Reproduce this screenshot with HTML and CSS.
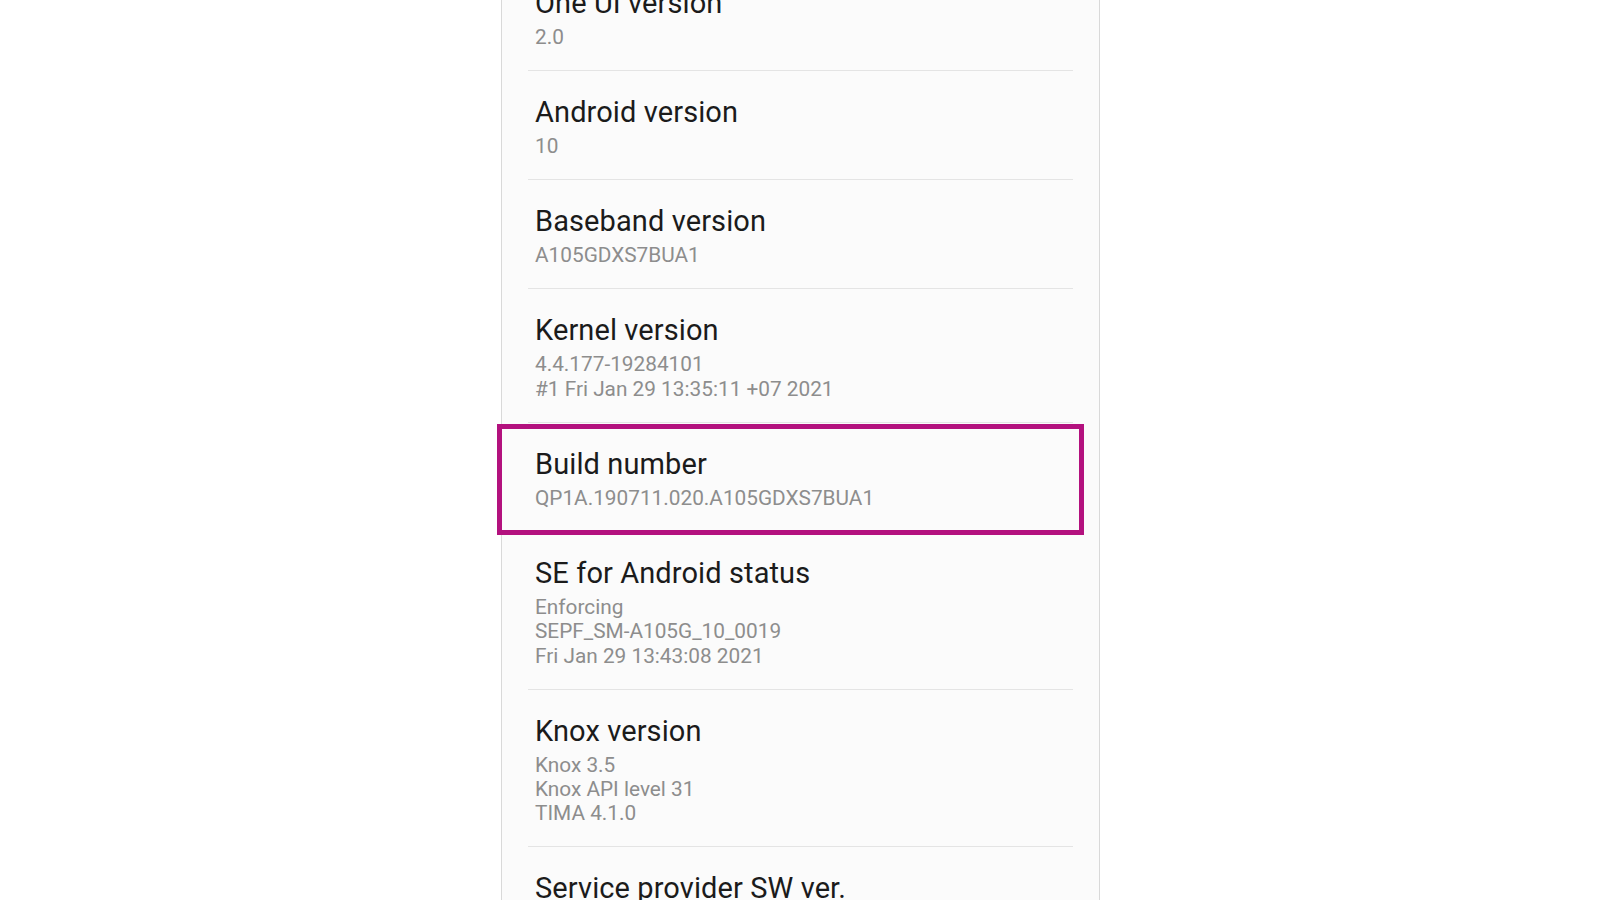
FILE: index.html
```html
<!DOCTYPE html>
<html lang="en">
<head>
<meta charset="utf-8">
<title>About phone - Software information</title>
<link rel="stylesheet" href="styles.css">
</head>
<body>
<main class="panel">
  <ul class="list">
    <li class="item">
      <div class="title">One UI version</div>
      <div class="sub">2.0</div>
    </li>
    <li class="item">
      <div class="title">Android version</div>
      <div class="sub">10</div>
    </li>
    <li class="item">
      <div class="title">Baseband version</div>
      <div class="sub">A105GDXS7BUA1</div>
    </li>
    <li class="item">
      <div class="title">Kernel version</div>
      <div class="sub">4.4.177-19284101</div>
      <div class="sub">#1 Fri Jan 29 13:35:11 +07 2021</div>
    </li>
    <li class="item item-highlight">
      <div class="title">Build number</div>
      <div class="sub">QP1A.190711.020.A105GDXS7BUA1</div>
    </li>
    <li class="item">
      <div class="title">SE for Android status</div>
      <div class="sub">Enforcing</div>
      <div class="sub">SEPF_SM-A105G_10_0019</div>
      <div class="sub">Fri Jan 29 13:43:08 2021</div>
    </li>
    <li class="item">
      <div class="title">Knox version</div>
      <div class="sub">Knox 3.5</div>
      <div class="sub">Knox API level 31</div>
      <div class="sub">TIMA 4.1.0</div>
    </li>
    <li class="item">
      <div class="title">Service provider SW ver.</div>
      <div class="sub">SAOMC_SM-A105G_ODM_XID_QQ_0012</div>
    </li>
  </ul>
</main>
</body>
</html>
```
FILE: styles.css
```css
html, body {
  margin: 0;
  padding: 0;
  background: #ffffff;
}
body {
  font-family: Roboto, "Noto Sans", "Liberation Sans", sans-serif;
  height: 900px;
  overflow: hidden;
}
.panel {
  display: flow-root;
  width: 597px;
  height: 900px;
  margin: 0 auto 0 501px;
  background: #fbfbfb;
  border-left: 1px solid #d9d9d9;
  border-right: 1px solid #d9d9d9;
}
.list {
  list-style: none;
  margin: -38.7px 0 0 0;
  padding: 0;
}
.item {
  position: relative;
  margin: 0 26px 0 26px;
  border-top: 1px solid #e4e4e4;
  padding: 23px 0 20.6px 7px;
}
.title {
  font-size: 29px;
  line-height: 37px;
  color: #1b1b1b;
  letter-spacing: 0.1px;
}
.sub {
  font-size: 20.8px;
  line-height: 24.4px;
  color: #8d8d8d;
}
.title + .sub {
  margin-top: 3px;
}
.item-highlight {
  z-index: 1;
}
.item-highlight::after {
  content: "";
  position: absolute;
  top: 1.5px;
  left: -31px;
  right: -11px;
  bottom: -4.5px;
  border: 5px solid #b3117e;
  pointer-events: none;
}
```
